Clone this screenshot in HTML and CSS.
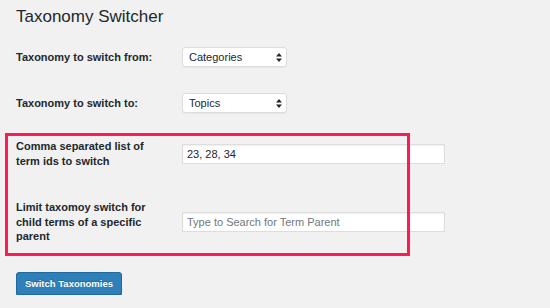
FILE: index.html
```html
<!DOCTYPE html>
<html>

<head>
    <title>Taxonomy Switcher</title>
    <link rel="stylesheet" href="styles.css">
</head>

<body>
    <div class="wrap">
        <h1 class="page-title">Taxonomy Switcher</h1>

        <form class="switch-form">
            <div class="row">
                <label class="label">Taxonomy to switch from:</label>
                <div class="field">
                    <span class="select-wrap">
                        <select class="select">
                            <option>Categories</option>
                        </select>
                        <svg class="arrows" width="6" height="9" viewBox="0 0 6 9">
                            <path d="M3 0 L6 3.5 H0 Z M0 5.5 H6 L3 9 Z" fill="#23282d"/>
                        </svg>
                    </span>
                </div>
            </div>

            <div class="row">
                <label class="label">Taxonomy to switch to:</label>
                <div class="field">
                    <span class="select-wrap">
                        <select class="select">
                            <option>Topics</option>
                        </select>
                        <svg class="arrows" width="6" height="9" viewBox="0 0 6 9">
                            <path d="M3 0 L6 3.5 H0 Z M0 5.5 H6 L3 9 Z" fill="#23282d"/>
                        </svg>
                    </span>
                </div>
            </div>

            <div class="highlight">
                <div class="row row-ids">
                    <label class="label">Comma separated list of term ids to switch</label>
                    <div class="field"><input class="text" type="text" value="23, 28, 34"></div>
                </div>

                <div class="row row-parent">
                    <label class="label">Limit taxomoy switch for child terms of a specific parent</label>
                    <div class="field"><input class="text" type="text" placeholder="Type to Search for Term Parent"></div>
                </div>

                <!-- red annotation box drawn over the two rows -->
                <div class="marker"></div>
            </div>

            <div class="actions">
                <button class="btn" type="button">Switch Taxonomies</button>
            </div>
        </form>
    </div>
</body>

</html>
```

FILE: styles.css
```css
body {
    margin: 0;
    background-color: #f1f1f1;
    color: #23282d;
    font-family: "Liberation Sans", Arial, sans-serif;
}

.wrap {
    padding: 0 16px;
}

.page-title {
    margin: 5px 0 6px 0;
    font-size: 17px;
    font-weight: 400;
    line-height: 23px;
}

.row {
    display: flex;
    align-items: center;
    padding: 13px 0;
}

.label {
    width: 150px;
    margin-right: 16px;
    font-size: 11px;
    font-weight: 700;
    line-height: 14.5px;
}

.field {
    flex: 1;
    display: flex;
}

.select-wrap {
    position: relative;
    display: inline-block;
}

.select {
    appearance: none;
    -webkit-appearance: none;
    width: 105px;
    height: 20px;
    padding: 0 0 0 6px;
    margin: 0;
    border: 1px solid #dddddd;
    border-radius: 3px;
    background-color: #fff;
    color: #23282d;
    font-family: "Liberation Sans", Arial, sans-serif;
    font-size: 11px;
    box-shadow: 0 1px 1px rgba(0, 0, 0, 0.04);
}

.arrows {
    position: absolute;
    right: 5px;
    top: 6px;
}

.text {
    width: 263px;
    height: 20px;
    box-sizing: border-box;
    margin: 0;
    padding: 0 4px;
    border: 1px solid #dddddd;
    background-color: #fff;
    color: #23282d;
    font-family: "Liberation Sans", Arial, sans-serif;
    font-size: 11px;
    box-shadow: inset 0 1px 2px rgba(0, 0, 0, 0.07);
    outline: 0;
}

.text::placeholder {
    color: #72777c;
}

.row-ids {
    padding-bottom: 16px;
}

.row-parent {
    padding-top: 16px;
}

.highlight {
    position: relative;
}

.marker {
    position: absolute;
    left: -11px;
    top: 7px;
    width: 399px;
    height: 117px;
    border: 3px solid #ff1a55;
    pointer-events: none;
}

.actions {
    margin-top: 15px;
}

.btn {
    height: 23px;
    padding: 0 8px;
    border: 1px solid #1f6a9f;
    border-radius: 3px;
    background-color: #2f7fb8;
    color: #fff;
    font-family: "Liberation Sans", Arial, sans-serif;
    font-size: 9.5px;
    font-weight: 700;
    text-shadow: 0 -1px 1px #1f6a9f;
    box-shadow: 0 1px 0 #1f6a9f;
}

.btn:hover {
    cursor: pointer;
}
```
